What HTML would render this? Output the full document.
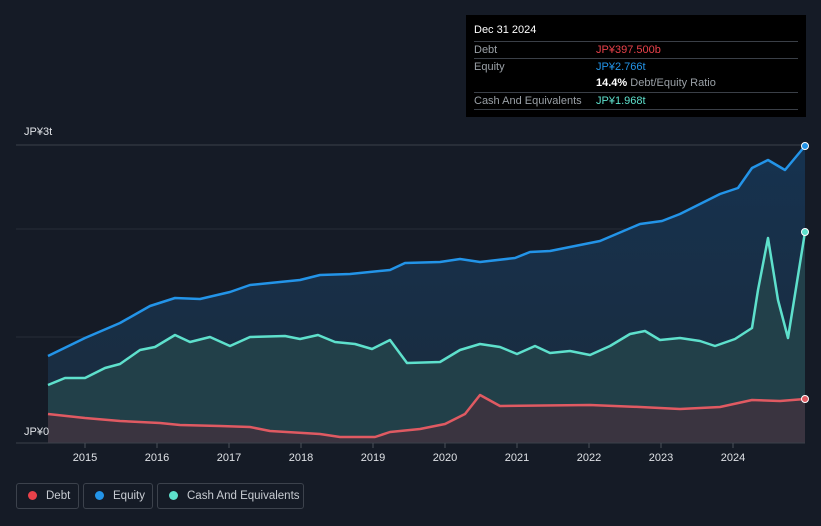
<html><head><style>html,body{margin:0;background:#151b26;width:821px;height:526px;overflow:hidden;font-family:"Liberation Sans",sans-serif;position:relative}
.tt{position:absolute;left:466px;top:15px;width:340px;height:102px;background:#000;color:#fff;font-size:11px}
.r{position:absolute;left:8px;right:8px;border-top:1px solid #3a3f47;height:17px;line-height:17px;color:#9aa0a6}
.v{position:absolute;left:122px}
.lg{position:absolute;top:483px;height:26px;border:1px solid #3c424c;border-radius:3px;color:#c8ccd2;font-size:11.5px;line-height:24px;box-sizing:border-box;white-space:nowrap}
.lg i{display:inline-block;width:9px;height:9px;border-radius:50%;margin:0 9px 0 11px;vertical-align:-1px}
</style></head><body>
<svg width="821" height="526" style="position:absolute;left:0;top:0">
<defs><linearGradient id="g" x1="0" y1="0" x2="0" y2="1"><stop offset="0" stop-color="#16324f"/><stop offset="1" stop-color="#1a2b3d"/></linearGradient></defs>
<line x1="16" y1="145" x2="805" y2="145" stroke="#3a404a"/>
<line x1="16" y1="229" x2="805" y2="229" stroke="#262d38"/>
<line x1="16" y1="337" x2="805" y2="337" stroke="#262d38"/>
<path d="M48,356 L85,338 120,323 150,306 175,298 200,299 230,292 250,285 280,282 300,280 320,275 350,274 390,270 405,263 440,262 460,259 480,262 515,258 530,252 550,251 570,247 600,241 640,224 662,221 680,214 720,194 738,188 752,168 768,160 785,170 805,146 L805,443 L48,443Z" fill="url(#g)"/>
<path d="M48,385 L65,378 85,378 105,368 120,364 140,350 155,347 175,335 190,342 210,337 230,346 250,337 285,336 300,339 318,335 335,342 355,344 372,349 390,340 407,363 440,362 460,350 480,344 500,347 517,354 535,346 550,353 570,351 590,355 610,346 630,334 645,331 660,340 680,338 700,341 715,346 735,339 752,328 758,290 768,238 778,300 788,338 805,232 L805,443 L48,443Z" fill="#24434a" opacity="0.9"/>
<path d="M48,414 L85,418 120,421 160,423 180,425 220,426 250,427 270,431 320,434 340,437 375,437 390,432 420,429 445,424 465,414 480,395 500,406 590,405 640,407 680,409 720,407 752,400 780,401 805,399 L805,443 L48,443Z" fill="#3a3440"/>
<polyline fill="none" stroke="#2394e8" stroke-width="2.5" stroke-linejoin="round" points="48,356 85,338 120,323 150,306 175,298 200,299 230,292 250,285 280,282 300,280 320,275 350,274 390,270 405,263 440,262 460,259 480,262 515,258 530,252 550,251 570,247 600,241 640,224 662,221 680,214 720,194 738,188 752,168 768,160 785,170 805,146"/>
<polyline fill="none" stroke="#5ee0cc" stroke-width="2.5" stroke-linejoin="round" points="48,385 65,378 85,378 105,368 120,364 140,350 155,347 175,335 190,342 210,337 230,346 250,337 285,336 300,339 318,335 335,342 355,344 372,349 390,340 407,363 440,362 460,350 480,344 500,347 517,354 535,346 550,353 570,351 590,355 610,346 630,334 645,331 660,340 680,338 700,341 715,346 735,339 752,328 758,290 768,238 778,300 788,338 805,232"/>
<polyline fill="none" stroke="#e05a62" stroke-width="2.5" stroke-linejoin="round" points="48,414 85,418 120,421 160,423 180,425 220,426 250,427 270,431 320,434 340,437 375,437 390,432 420,429 445,424 465,414 480,395 500,406 590,405 640,407 680,409 720,407 752,400 780,401 805,399"/>
<line x1="16" y1="443" x2="805" y2="443" stroke="#3a404a"/>
<g stroke="#4a505a"><line x1="85" y1="443" x2="85" y2="448"/><line x1="157" y1="443" x2="157" y2="448"/><line x1="229" y1="443" x2="229" y2="448"/><line x1="301" y1="443" x2="301" y2="448"/><line x1="373" y1="443" x2="373" y2="448"/><line x1="445" y1="443" x2="445" y2="448"/><line x1="517" y1="443" x2="517" y2="448"/><line x1="589" y1="443" x2="589" y2="448"/><line x1="661" y1="443" x2="661" y2="448"/><line x1="733" y1="443" x2="733" y2="448"/></g>
<g fill="#dfe2e6" font-size="11" text-anchor="middle"><text x="85" y="461">2015</text><text x="157" y="461">2016</text><text x="229" y="461">2017</text><text x="301" y="461">2018</text><text x="373" y="461">2019</text><text x="445" y="461">2020</text><text x="517" y="461">2021</text><text x="589" y="461">2022</text><text x="661" y="461">2023</text><text x="733" y="461">2024</text></g>
<text x="24" y="135" fill="#dfe2e6" font-size="11">JP¥3t</text>
<text x="24" y="435" fill="#dfe2e6" font-size="11">JP¥0</text>
<circle cx="805" cy="146" r="3.5" fill="#2394e8" stroke="#fff"/>
<circle cx="805" cy="232" r="3.5" fill="#5ee0cc" stroke="#fff"/>
<circle cx="805" cy="399" r="3.5" fill="#e05a62" stroke="#fff"/>
</svg>
<div class="tt">
<div style="position:absolute;left:8px;top:9px;font-size:11px">Dec 31 2024</div>
<div class="r" style="top:26px">Debt<span class="v" style="color:#e8414a">JP¥397.500b</span></div>
<div class="r" style="top:43px">Equity<span class="v" style="color:#2394e8">JP¥2.766t</span></div>
<div class="r" style="top:60px;border-top:none"><span class="v"><b style="color:#fff">14.4%</b> Debt/Equity Ratio</span></div>
<div class="r" style="top:77px">Cash And Equivalents<span class="v" style="color:#5ee0cc">JP¥1.968t</span></div>
<div class="r" style="top:94px;height:0"></div>
</div>
<div class="lg" style="left:16px;width:63px"><i style="background:#e8414a"></i>Debt</div>
<div class="lg" style="left:83px;width:70px"><i style="background:#2394e8"></i>Equity</div>
<div class="lg" style="left:157px;width:147px"><i style="background:#5ee0cc"></i>Cash And Equivalents</div>
</body></html>
